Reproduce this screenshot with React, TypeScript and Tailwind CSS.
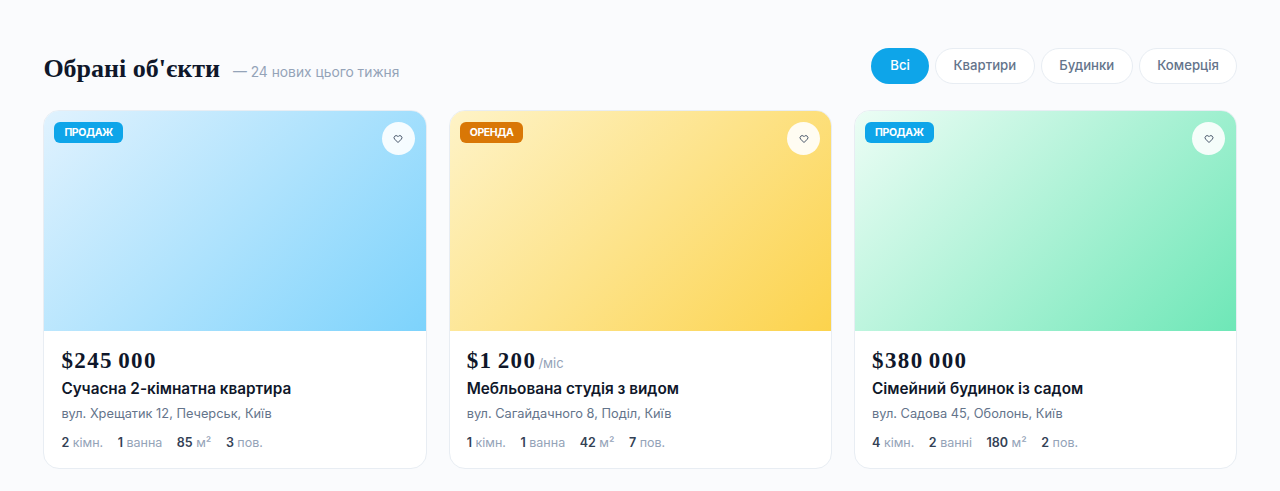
import React from "react";

const serif = "font-['Liberation_Serif',serif]";

const listings = [
  {
    badge: "ПРОДАЖ",
    badgeClass: "bg-[#0ea5e9]",
    imageClass: "bg-[linear-gradient(135deg,#e0f2fe,#7dd3fc)]",
    price: "$245 000",
    suffix: "",
    title: "Сучасна 2-кімнатна квартира",
    address: "вул. Хрещатик 12, Печерськ, Київ",
    stats: [["2", "кімн."], ["1", "ванна"], ["85", "м²"], ["3", "пов."]],
  },
  {
    badge: "ОРЕНДА",
    badgeClass: "bg-[#d97706]",
    imageClass: "bg-[linear-gradient(135deg,#fef3c7,#fcd34d)]",
    price: "$1 200",
    suffix: "/міс",
    title: "Мебльована студія з видом",
    address: "вул. Сагайдачного 8, Поділ, Київ",
    stats: [["1", "кімн."], ["1", "ванна"], ["42", "м²"], ["7", "пов."]],
  },
  {
    badge: "ПРОДАЖ",
    badgeClass: "bg-[#0ea5e9]",
    imageClass: "bg-[linear-gradient(135deg,#ecfdf5,#6ee7b7)]",
    price: "$380 000",
    suffix: "",
    title: "Сімейний будинок із садом",
    address: "вул. Садова 45, Оболонь, Київ",
    stats: [["4", "кімн."], ["2", "ванні"], ["180", "м²"], ["2", "пов."]],
  },
];

const filters = ["Всі", "Квартири", "Будинки", "Комерція"];

const Heart = () => (
  <svg viewBox="0 0 24 24" className="h-[10px] w-[10px]" fill="none" stroke="#475569" strokeWidth="2.4" strokeLinejoin="round">
    <path d="M12 20.5 4 12.4a5 5 0 0 1 0-7 4.9 4.9 0 0 1 7 0l1 1 1-1a4.9 4.9 0 0 1 7 0 5 5 0 0 1 0 7z" />
  </svg>
);

const Card = ({ item }: { item: (typeof listings)[number] }) => (
  <article className="overflow-hidden rounded-[16px] border border-[#e8edf3] bg-white">
    <div className={`relative h-[220px] ${item.imageClass}`}>
      <span className={`absolute left-[10px] top-[11px] rounded-[6px] px-[10px] py-[3.5px] text-[10.5px] leading-[14px] font-bold tracking-[-0.4px] text-white ${item.badgeClass}`}>
        {item.badge}
      </span>
      <button className="absolute right-[11px] top-[11px] flex h-[33px] w-[33px] items-center justify-center rounded-full bg-white/90">
        <Heart />
      </button>
    </div>
    <div className="px-[17px] pb-[16px] pt-[16px]">
      <div className="flex items-baseline gap-[2px]">
        <span className={`${serif} text-[23px] leading-[28px] font-bold tracking-[1.4px] [word-spacing:-2px] text-[#0f172a]`}>{item.price}</span>
        {item.suffix && <span className="text-[13px] text-[#94a3b8]">{item.suffix}</span>}
      </div>
      <h3 className="mt-[3px] text-[15.3px] leading-[22px] font-semibold text-[#0f172a]">{item.title}</h3>
      <p className="mt-[4px] text-[12.8px] leading-[20px] text-[#64748b]">{item.address}</p>
      <div className="mt-[10px] flex gap-[14.5px] text-[12.5px] leading-[18px]">
        {item.stats.map(([value, label]) => (
          <span key={label} className="text-[#94a3b8]">
            <b className="font-semibold text-[#334155]">{value}</b> {label}
          </span>
        ))}
      </div>
    </div>
  </article>
);

export default function App() {
  return (
    <div className="h-[491px] overflow-hidden bg-[#fafbfd] pl-[43.4px] pr-[42.6px] pt-[48px] font-['Inter',sans-serif]">
      <header className="flex h-[36px] items-center justify-between">
        <div className="mt-[6px] flex items-baseline gap-[13px]">
          <h2 className={`${serif} text-[26px] leading-[36px] font-bold text-[#0f172a]`}>Обрані об'єкти</h2>
          <span className="text-[13.8px] text-[#94a3b8]">— 24 нових цього тижня</span>
        </div>
        <div className="flex gap-[6px]">
          {filters.map((filter, i) => (
            <button
              key={filter}
              className={
                i === 0
                  ? "h-[36px] rounded-full bg-[#0ea5e9] px-[19px] text-[13.2px] font-medium text-white"
                  : "h-[36px] rounded-full border border-[#e8edf3] bg-white px-[17.5px] text-[13.2px] font-medium text-[#64748b]"
              }
            >
              {filter}
            </button>
          ))}
        </div>
      </header>
      <section className="mt-[26px] grid grid-cols-3 gap-[22px]">
        {listings.map((item) => (
          <Card key={item.title} item={item} />
        ))}
      </section>
    </div>
  );
}
